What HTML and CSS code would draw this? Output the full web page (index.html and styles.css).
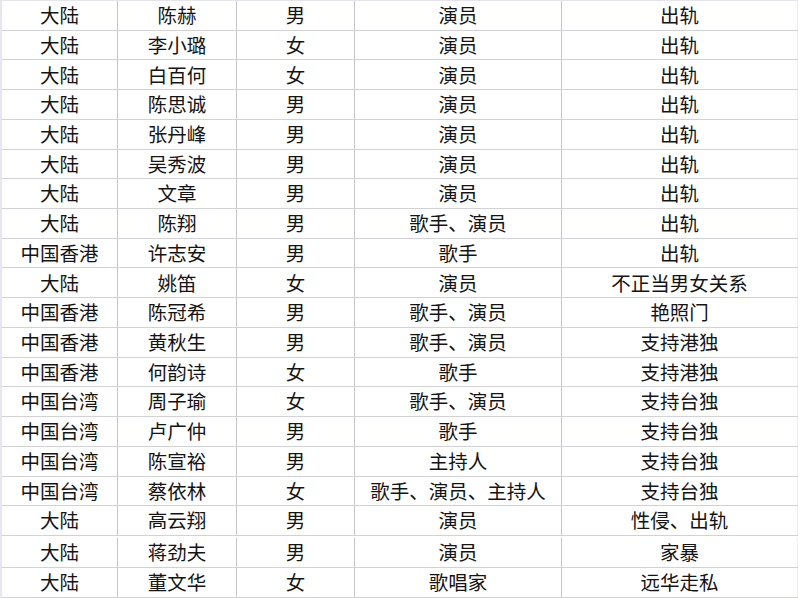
FILE: index.html
```html
<!DOCTYPE html>
<html lang="zh-CN">
<head>
<meta charset="utf-8">
<title>名单</title>
<link rel="stylesheet" href="styles.css">
</head>
<body>
<div class="sheet">
  <div class="row"><div class="c">大陆</div><div class="c">陈赫</div><div class="c">男</div><div class="c">演员</div><div class="c">出轨</div></div>
  <div class="row"><div class="c">大陆</div><div class="c">李小璐</div><div class="c">女</div><div class="c">演员</div><div class="c">出轨</div></div>
  <div class="row"><div class="c">大陆</div><div class="c">白百何</div><div class="c">女</div><div class="c">演员</div><div class="c">出轨</div></div>
  <div class="row"><div class="c">大陆</div><div class="c">陈思诚</div><div class="c">男</div><div class="c">演员</div><div class="c">出轨</div></div>
  <div class="row"><div class="c">大陆</div><div class="c">张丹峰</div><div class="c">男</div><div class="c">演员</div><div class="c">出轨</div></div>
  <div class="row"><div class="c">大陆</div><div class="c">吴秀波</div><div class="c">男</div><div class="c">演员</div><div class="c">出轨</div></div>
  <div class="row"><div class="c">大陆</div><div class="c">文章</div><div class="c">男</div><div class="c">演员</div><div class="c">出轨</div></div>
  <div class="row"><div class="c">大陆</div><div class="c">陈翔</div><div class="c">男</div><div class="c">歌手、演员</div><div class="c">出轨</div></div>
  <div class="row"><div class="c">中国香港</div><div class="c">许志安</div><div class="c">男</div><div class="c">歌手</div><div class="c">出轨</div></div>
  <div class="row"><div class="c">大陆</div><div class="c">姚笛</div><div class="c">女</div><div class="c">演员</div><div class="c">不正当男女关系</div></div>
  <div class="row"><div class="c">中国香港</div><div class="c">陈冠希</div><div class="c">男</div><div class="c">歌手、演员</div><div class="c">艳照门</div></div>
  <div class="row"><div class="c">中国香港</div><div class="c">黄秋生</div><div class="c">男</div><div class="c">歌手、演员</div><div class="c">支持港独</div></div>
  <div class="row"><div class="c">中国香港</div><div class="c">何韵诗</div><div class="c">女</div><div class="c">歌手</div><div class="c">支持港独</div></div>
  <div class="row"><div class="c">中国台湾</div><div class="c">周子瑜</div><div class="c">女</div><div class="c">歌手、演员</div><div class="c">支持台独</div></div>
  <div class="row"><div class="c">中国台湾</div><div class="c">卢广仲</div><div class="c">男</div><div class="c">歌手</div><div class="c">支持台独</div></div>
  <div class="row"><div class="c">中国台湾</div><div class="c">陈宣裕</div><div class="c">男</div><div class="c">主持人</div><div class="c">支持台独</div></div>
  <div class="row"><div class="c">中国台湾</div><div class="c">蔡依林</div><div class="c">女</div><div class="c">歌手、演员、主持人</div><div class="c">支持台独</div></div>
  <div class="row"><div class="c">大陆</div><div class="c">高云翔</div><div class="c">男</div><div class="c">演员</div><div class="c">性侵、出轨</div></div>
  <div class="row row-split"><div class="c">大陆</div><div class="c">蒋劲夫</div><div class="c">男</div><div class="c">演员</div><div class="c">家暴</div></div>
  <div class="row row-tall"><div class="c">大陆</div><div class="c">董文华</div><div class="c">女</div><div class="c">歌唱家</div><div class="c">远华走私</div></div>
</div>
</body>
</html>
```

FILE: styles.css
```css
html, body {
  margin: 0;
  padding: 0;
  background: #ffffff;
}

body {
  width: 798px;
  height: 598px;
  overflow: hidden;
  font-family: "Noto Sans CJK SC", "Noto Sans", sans-serif;
  font-size: 19.5px;
  color: #141414;
}

.sheet {
  display: flex;
  flex-direction: column;
  width: 798px;
  border-top: 1px solid #e4e4ea;
  border-left: 2px solid #e6e6f0;
  box-sizing: border-box;
}

.row {
  display: grid;
  grid-template-columns: 116px 119px 118px 207px 236px;
  height: 29.72px;
  box-sizing: border-box;
  border-bottom: 1px solid #d2d2d6;
}

.row-split {
  margin-top: 2px;
  height: 29.9px;
}

.row-tall {
  height: 30px;
}

.c {
  display: flex;
  align-items: center;
  justify-content: center;
  border-right: 1px solid #c6c6ca;
  line-height: 1;
  white-space: nowrap;
  padding-bottom: 1px;
}

.c:last-child {
  border-right-color: #ececf2;
}
```
